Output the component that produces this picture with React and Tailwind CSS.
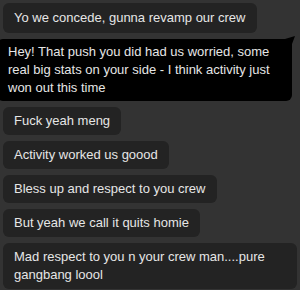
export default function App() {
  const gray = "self-start rounded-[6px] bg-[#232323] px-[11px] py-[5px] leading-[18px]";
  return (
    <div
      className="w-[300px] h-[290px] overflow-hidden bg-[#333333] text-[13px] text-[#e6e6e6] flex flex-col gap-[6px] pt-[3px] px-[3px]"
      style={{ fontFamily: '"Liberation Sans", Arial, sans-serif' }}
    >
      <div className={gray + " py-[6px]"}>Yo we concede, gunna revamp our crew</div>
      <div className="relative ml-[-6px] w-[295px] rounded-[6px] rounded-tr-none bg-black px-[11px] py-[4px] leading-[18px]">
        Hey! That push you did had us worried, some real big stats on your side - I think activity just won out this time
        <svg className="absolute right-[-3px] top-[-3px]" width="10" height="8" viewBox="0 0 10 8">
          <path d="M0 3 L10 0 L7 8 L0 8 Z" fill="#000" />
        </svg>
      </div>
      <div className={gray}>Fuck yeah meng</div>
      <div className={gray}>Activity worked us goood</div>
      <div className={gray}>Bless up and respect to you crew</div>
      <div className={gray}>But yeah we call it quits homie</div>
      <div className={gray + " w-[294px]"}>Mad respect to you n your crew man....pure gangbang loool</div>
    </div>
  );
}
